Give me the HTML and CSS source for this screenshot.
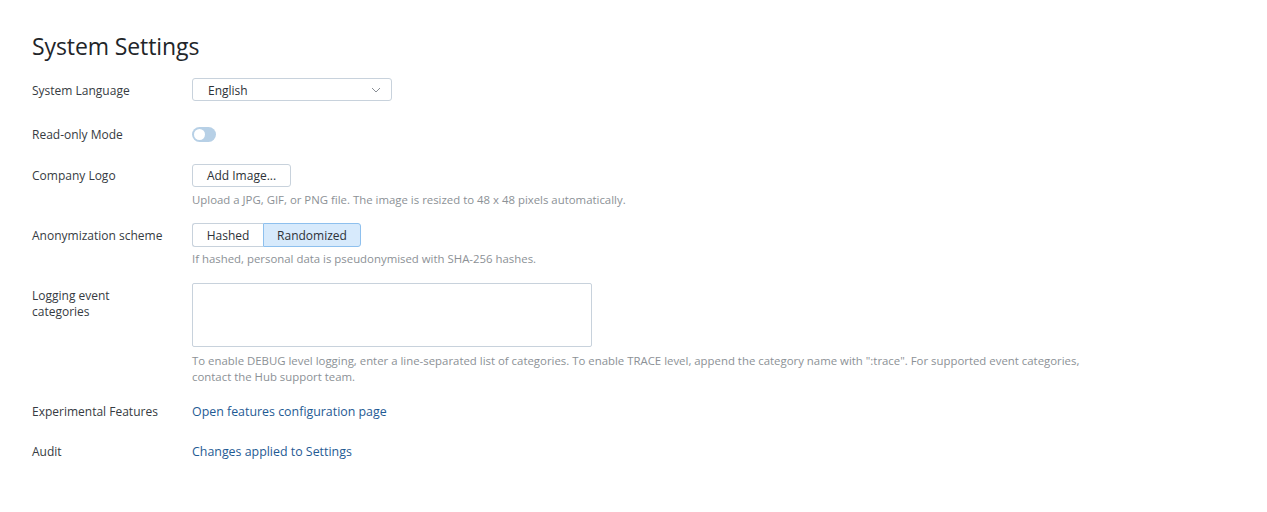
FILE: index.html
```html
<!DOCTYPE html>
<html>
<head>
<meta charset="utf-8">
<link rel="stylesheet" href="styles.css">
</head>
<body>
<div class="page">
  <h1 class="title">System Settings</h1>
  <div class="form">
    <div class="row row-lang">
      <div class="label">System Language</div>
      <div class="control">
        <div class="select">
          <span class="select-text">English</span>
          <svg class="chev" width="10" height="6" viewBox="0 0 10 6"><path d="M1 1 L5 5 L9 1" fill="none" stroke="#8a8f96" stroke-width="1"/></svg>
        </div>
      </div>
    </div>
    <div class="row row-toggle">
      <div class="label">Read-only Mode</div>
      <div class="control">
        <div class="toggle"><div class="knob"></div></div>
      </div>
    </div>
    <div class="row row-logo">
      <div class="label">Company Logo</div>
      <div class="control">
        <button class="btn">Add Image...</button>
        <div class="hint">Upload a JPG, GIF, or PNG file. The image is resized to 48 x 48 pixels automatically.</div>
      </div>
    </div>
    <div class="row row-anon">
      <div class="label">Anonymization scheme</div>
      <div class="control">
        <div class="seg">
          <button class="seg-btn">Hashed</button>
          <button class="seg-btn active">Randomized</button>
        </div>
        <div class="hint">If hashed, personal data is pseudonymised with SHA-256 hashes.</div>
      </div>
    </div>
    <div class="row row-log">
      <div class="label label-wrap">Logging event categories</div>
      <div class="control">
        <div class="textarea"></div>
        <div class="hint hint-wide">To enable DEBUG level logging, enter a line-separated list of categories. To enable TRACE level, append the category name with ":trace". For supported event categories, contact the Hub support team.</div>
      </div>
    </div>
    <div class="row row-exp">
      <div class="label">Experimental Features</div>
      <div class="control"><a class="link">Open features configuration page</a></div>
    </div>
    <div class="row row-audit">
      <div class="label">Audit</div>
      <div class="control"><a class="link">Changes applied to Settings</a></div>
    </div>
  </div>
</div>
</body>
</html>
```
FILE: styles.css
```css
html, body {
  margin: 0;
  padding: 0;
  background: #ffffff;
}
body {
  font-family: "Open Sans", "Noto Sans", sans-serif;
  font-size: 12px;
  color: #333840;
}
.page {
  padding: 30px 32px 0 32px;
}
.title {
  margin: 0;
  font-size: 23px;
  font-weight: 400;
  line-height: 32px;
  color: #222529;
  letter-spacing: -0.1px;
}
.form {
  display: flex;
  flex-direction: column;
  margin-top: 16px;
}
.row {
  display: flex;
  align-items: flex-start;
}
.label {
  width: 160px;
  flex: none;
  line-height: 16px;
  color: #363b42;
}
.control {
  flex: 1;
  display: flex;
  flex-direction: column;
  align-items: flex-start;
}
.row-lang .label { padding-top: 5px; }
.select {
  height: 21px;
  border: 1px solid #c8d2dc;
  border-radius: 3px;
  display: flex;
  align-items: center;
  justify-content: space-between;
  padding: 0 10px 0 15px;
  box-sizing: content-box;
  width: 173px;
  color: #2d3238;
}
.select-text { padding-top: 2px; }
.chev { margin-top: 1px; }
.row-toggle { margin-top: 25px; }
.row-toggle .label { padding-top: 1px; }
.toggle {
  width: 24px;
  height: 15px;
  border-radius: 8px;
  background: #b7d0e6;
  position: relative;
  margin-top: 1px;
}
.knob {
  position: absolute;
  left: 2px;
  top: 2px;
  width: 11px;
  height: 11px;
  border-radius: 50%;
  background: #ffffff;
}
.row-logo { margin-top: 21px; }
.row-logo .label { padding-top: 4px; }
.btn {
  font-family: inherit;
  font-size: 12px;
  color: #2d3238;
  background: #ffffff;
  border: 1px solid #c8d2dc;
  border-radius: 3px;
  height: 23px;
  width: 99px;
  padding: 0;
  line-height: 21px;
  margin: 0;
}
.hint {
  font-size: 11.4px;
  color: #8c9196;
  line-height: 16px;
  margin-top: 5px;
}
.hint-wide { max-width: 900px; }
.row-anon { margin-top: 15px; }
.row-anon .label { padding-top: 5px; }
.row-anon .hint { margin-top: 4px; }
.seg { display: flex; }
.seg-btn {
  font-family: inherit;
  font-size: 12px;
  color: #2d3238;
  background: #ffffff;
  border: 1px solid #c8d2dc;
  height: 24px;
  line-height: 22px;
  padding: 1px 0 0 0;
  margin: 0;
}
.seg-btn:first-child {
  border-radius: 3px 0 0 3px;
  border-right: none;
  width: 71px;
}
.seg-btn.active {
  background: #d7eafc;
  border-color: #8ec0ee;
  border-radius: 0 3px 3px 0;
  width: 98px;
}
.row-log { margin-top: 16px; }
.row-log .label { padding-top: 5px; width: 100px; margin-right: 60px; }
.textarea {
  width: 398px;
  height: 62px;
  border: 1px solid #c8d2dc;
  border-radius: 2px;
}
.row-log .hint { margin-top: 6px; }
.row-exp { margin-top: 19px; }
.row-audit { margin-top: 24px; }
.link {
  color: #1f5b94;
  font-size: 12.4px;
  line-height: 16px;
  cursor: pointer;
}
```
